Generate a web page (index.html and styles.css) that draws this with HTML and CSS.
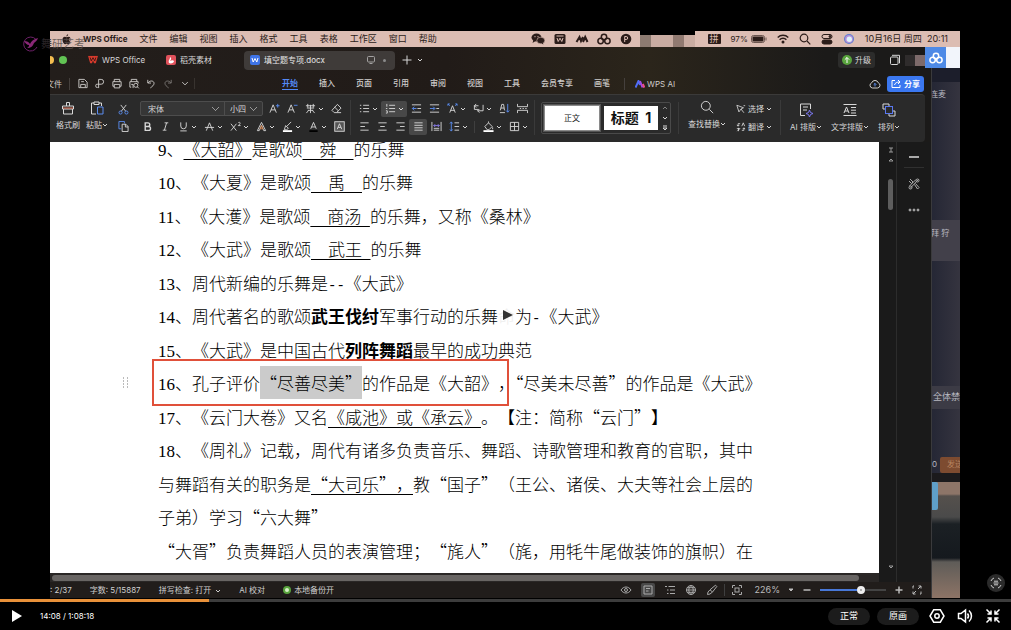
FILE: index.html
```html
<!DOCTYPE html>
<html lang="zh-CN">
<head>
    <meta charset="UTF-8">
    <meta name="viewport" content="width=device-width, initial-scale=1.0">
    <title>填空题专项.docx</title>
    <link rel="stylesheet" href="styles.css">
</head>
<body>
    <!-- Shared icons -->
    <svg class="sprite" aria-hidden="true">
        <symbol id="caret" viewBox="0 0 6 6"><path d="M1 2l2 2 2-2"/></symbol>
        <symbol id="pan" viewBox="0 0 14 12"><circle cx="7" cy="4" r="2.7"/><circle cx="3.6" cy="8" r="2.7"/><circle cx="10.4" cy="8" r="2.7"/></symbol>
        <symbol id="search" viewBox="0 0 12 12"><circle cx="5" cy="5" r="3.8"/><path d="M8 8l3.3 3.3"/></symbol>
        <symbol id="wps" viewBox="0 0 12 10"><path d="M0 0h12l-2.6 9H7.2L6 5.5 4.8 9H2.6z" fill="#d63a2c" stroke="none"/><path d="M2.6 2l1.3 4L6 2.2 8.1 6l1.3-4" stroke="#2a1512"/></symbol>
    </svg>

    <main class="stage">
        <div class="watermark">
            <svg viewBox="0 0 16 16"><path d="M13 3.5A7 7 0 1 0 14 11" stroke="#6d2068"/><path d="M1 5c3 0 5 1 6 3 1-3 4-5 8-6-1 3-3 4-4 5-1 3-3 5-7 5 2-1 2-2 2-3-2 0-4-2-5-4z" fill="#8a2877" stroke="none"/></svg>
            <span><b>舞</b>研艺考</span>
        </div>

        <div class="screen">
            <header class="menubar">
                <nav class="mac-menu">
                    <svg class="apple" viewBox="0 0 10 12"><path d="M6.8.2C6.9 1.500 6 2.700 4.900 2.700 4.800 1.500 5.700.4 6.800.2zM9.300 8.700c-.5 1.300-1.300 2.600-2.200 2.600-.8 0-1-.5-1.900-.5s-1.200.5-1.900.5C2.100 11.300.5 8.700.5 6.300.5 4.200 1.800 3 3.200 3c.8 0 1.400.5 2 .5.6 0 1.300-.6 2.300-.6.6 0 1.400.3 1.800 1-1.900 1.100-1.600 3.800 0 4.800z"/></svg>
                    <b>WPS Office</b>
                    <span>文件</span><span>编辑</span><span>视图</span><span>插入</span><span>格式</span><span>工具</span><span>表格</span><span>工作区</span><span>窗口</span><span>帮助</span>
                </nav>
                <div class="mac-apps">
                    <svg viewBox="0 0 14 12"><ellipse cx="5.500" cy="4.500" rx="5" ry="4"/><ellipse cx="9.800" cy="7.500" rx="4" ry="3.300" stroke="#dcbdb3" stroke-width=".6"/><path d="M1.500 10l1-3 2 1zM12.500 11.500l-1-2-1 1z"/><circle cx="4" cy="3.700" r=".6" fill="#dcbdb3"/><circle cx="7" cy="3.700" r=".6" fill="#dcbdb3"/></svg>
                    <svg viewBox="0 0 14 12"><rect x="1.500" y="1" width="11" height="10" rx="1.500"/><path d="M3.500 3h7M4 5l1.200 3.500L7 5.200l1.800 3.300L10 5" fill="none" stroke="#dcbdb3"/></svg>
                    <svg viewBox="0 0 14 12"><path d="M1.500 9l3-5 1.500 4 2-4M8 9l2.200-5 2.300 5" fill="none" stroke="#2b1c19" stroke-width="2"/></svg>
                    <svg viewBox="0 0 14 12" fill="none" stroke-width="1.500"><use href="#pan"/></svg>
                    <svg viewBox="0 0 14 12"><circle cx="7" cy="6" r="5.300"/><path d="M5.700 9V3.500h1.500a1.500 1.500 0 0 1 0 3H6" fill="none" stroke="#dcbdb3"/></svg>
                </div>
                <div class="mosaic"><i></i><i></i><i></i><i></i><i></i></div>
                <div class="mac-status">
                    <span class="ime">拼</span>
                    <span class="battery">97% <svg viewBox="0 0 16 8"><rect x=".5" y=".5" width="13" height="7" rx="2" fill="none" stroke="#6b5650"/><rect x="1.500" y="1.500" width="11" height="5" rx="1"/><path d="M15 2.500v3" stroke="#6b5650"/></svg></span>
                    <svg viewBox="0 0 12 10" fill="none" stroke-width="1.400"><path d="M.7 3.500a7.500 7.500 0 0 1 10.600 0M2.600 5.700a4.800 4.800 0 0 1 6.800 0"/><circle cx="6" cy="8" r=".8"/></svg>
                    <svg viewBox="0 0 12 12" fill="none" stroke-width="1.200"><use href="#search"/></svg>
                    <svg viewBox="0 0 12 12" fill="none"><rect x="1" y="1.500" width="10" height="4" rx="2"/><rect x="1" y="7" width="10" height="4" rx="2" fill="#2b1c19"/><circle cx="9" cy="3.500" r="1" fill="#2b1c19"/></svg>
                    <svg viewBox="0 0 12 12"><circle cx="6" cy="6" r="5" fill="#5c7fd0"/><circle cx="6" cy="6" r="4" fill="#b58fd8"/><circle cx="6.300" cy="6.200" r="2.700" fill="#dff3fa"/></svg>
                    <time>10月16日 周四&nbsp; 20:11</time>
                </div>
            </header>

            <div class="desktop">
                <section class="window">
                    <div class="tabs">
                        <div class="lights"><i></i><i></i></div>
                        <div class="tab home"><svg viewBox="0 0 12 10"><use href="#wps"/></svg>WPS Office</div>
                        <div class="tab store"><svg viewBox="0 0 10 10"><rect width="10" height="10" rx="2" fill="#e0525b" stroke="none"/><path d="M3 8c-1-3 1-3 1-6 2 1 1 3 0 4 2-1 3-1 4 0 0 2-3 3-5 2z" fill="#fff" stroke="none"/></svg>稻壳素材</div>
                        <div class="tab active">
                            <svg viewBox="0 0 10 10"><rect width="10" height="10" rx="2" fill="#3e74e8" stroke="none"/><path d="M2 3l1.200 4L5 3.500 6.800 7 8 3" stroke="#fff"/></svg>
                            填空题专项.docx
                            <svg class="screen-icon" viewBox="0 0 10 10"><rect x="1.500" y="1.500" width="7" height="5.500" rx="1"/><path d="M3.500 8.500h3"/></svg>
                            <i class="unsaved"></i>
                        </div>
                        <button class="new-tab" aria-label="新建"><svg viewBox="0 0 10 10"><path d="M5 .5v9M.5 5h9"/></svg><svg class="caret" viewBox="0 0 6 6"><use href="#caret"/></svg></button>
                        <div class="tabs-right">
                            <button class="upgrade"><svg viewBox="0 0 10 10"><circle cx="5" cy="5" r="5" fill="#58a33d" stroke="none"/><path d="M5 8V2.500M2.800 4.700L5 2.500l2.200 2.200" stroke="#fff"/></svg>升级</button>
                            <svg class="restore" viewBox="0 0 12 12"><rect x="1.500" y="3" width="7.500" height="7.500" rx="1"/><path d="M3 1.300h7.500v8"/></svg>
                            <div class="blurred"><i></i><i></i></div>
                        </div>
                    </div>

                    <div class="menus">
                        <span class="file-menu">文件</span>
                        <div class="quick">
                            <svg viewBox="0 0 12 12"><path d="M1.500 1.500h6l3 3v6h-9zM3.500 10V7h5v3M4 4h3"/></svg>
                            <svg viewBox="0 0 12 12"><path d="M4.500 11V1.500h2.800a2.500 2.500 0 0 1 0 5.300H3.500a1.800 1.800 0 1 0 0 3.500"/></svg>
                            <svg viewBox="0 0 12 12"><path d="M3 4V1.500h6V4M3 9H1.500V4h9v5H9M3 7h6v3.800H3z"/></svg>
                            <svg viewBox="0 0 12 12"><path d="M3 4V1.500h6V4M3 10H1.500V4h9v2M3 7h2v4"/><circle cx="8" cy="8" r="2.200"/><path d="M9.700 9.700l1.600 1.600"/></svg>
                            <svg viewBox="0 0 12 12"><path d="M2.500 2v3.500H6M2.800 5.300c2-3 6.500-2.500 6.500.5 0 2-2 3.500-4 5"/></svg>
                            <svg class="dim" viewBox="0 0 12 12"><path d="M9.500 2v3.500H6M9.200 5.300c-2-3-6.500-2.500-6.500.5 0 2 2 3.500 4 5"/></svg>
                            <svg viewBox="0 0 12 12"><path d="M3 4.500l3 3 3-3"/></svg>
                        </div>
                        <nav class="ribbon-tabs">
                            <a href="#" class="current">开始</a><a href="#">插入</a><a href="#">页面</a><a href="#">引用</a><a href="#">审阅</a><a href="#">视图</a><a href="#">工具</a><a href="#">会员专享</a><a href="#">画笔</a>
                        </nav>
                        <a href="#" class="ai"><svg viewBox="0 0 10 8"><path d="M.5 7.500L3.500 1l1.500 4" stroke="#4f6df5" stroke-width="2"/><path d="M5 1l2.500 6.500" stroke="#a14bea" stroke-width="2"/><path d="M7.800 4l1.500 3.500" stroke="#ee4f87" stroke-width="2"/></svg>WPS AI</a>
                        <div class="menus-right">
                            <svg viewBox="0 0 12 12"><path d="M3.500 10a2.700 2.700 0 0 1-.8-5.200 3.500 3.500 0 0 1 6.600 0A2.700 2.700 0 0 1 8.500 10z"/><path d="M6 8.500v-3M4.700 6.700L6 5.400l1.300 1.300" stroke="#5a8cf0"/></svg>
                            <button class="share"><svg viewBox="0 0 10 10"><path d="M4 1.500H1v7h8V6M3.500 6c.5-2 2-3 5.500-3M7 1l2 2-2 2"/></svg>分享</button>
                        </div>
                    </div>

                    <div class="ribbon">
                        <div class="clipboard">
                            <button class="big"><svg viewBox="0 0 14 14"><path d="M5.500 5V1.500h3V5M1.500 5h11v3h-11zM2.500 8v5h9V8"/><path d="M2 7h10" stroke="#d9694f"/></svg>格式刷</button>
                            <button class="big"><svg viewBox="0 0 14 14"><path d="M4 2H1.500v11H6M9 2h2.500v3M4 1h5v2.500H4z"/><path d="M7.500 6h5.500v7H7.500z" stroke="#5a8cf0"/></svg><span>粘贴<svg class="caret" viewBox="0 0 6 6"><use href="#caret"/></svg></span></button>
                            <div class="rows">
                                <button class="tool" aria-label="剪切"><svg viewBox="0 0 12 12"><path d="M3 1l5.500 7M9 1L3.500 8"/><g stroke="#5a8cf0"><circle cx="2.800" cy="9.300" r="1.700"/><circle cx="9.200" cy="9.300" r="1.700"/></g></svg></button>
                                <button class="tool" aria-label="复制"><svg viewBox="0 0 12 12"><path d="M3.500 8.500h-2.500v-8h6v2" stroke="#5a8cf0"/><path d="M4.500 3.500h4l2.500 2.500v5.500H4.500zM8 3.500v3h3"/></svg></button>
                            </div>
                        </div>

                        <div class="rows font-group">
                            <div class="row">
                                <div class="selects">
                                    <select class="font-name" aria-label="字体"><option>宋体</option></select>
                                    <select class="font-size" aria-label="字号"><option>小四</option></select>
                                </div>
                                <button class="tool" aria-label="增大字号"><svg viewBox="0 0 12 12"><path d="M1 10.500l3.500-8.500L8 10.500M2.200 7.500h4.600"/><path d="M9.500 1v4M7.500 3h4" stroke="#5a8cf0"/></svg></button>
                                <button class="tool" aria-label="减小字号"><svg viewBox="0 0 12 12"><path d="M1 10.500l3.500-8.500L8 10.500M2.200 7.500h4.600"/><path d="M7.500 2.500h4" stroke="#5a8cf0"/></svg></button>
                                <button class="tool drop" aria-label="拼音指南"><svg viewBox="0 0 12 12"><path d="M1 3h10M3 1v4M9 1v4M2 5.500h8M6 2v9M3 8h6M1.500 11L4 8M10.500 11L8 8"/></svg><svg class="caret" viewBox="0 0 6 6"><use href="#caret"/></svg></button>
                                <button class="tool" aria-label="清除格式"><svg viewBox="0 0 12 12"><path d="M7 1.500l4 4-5 5H3.500l-2.500-2.500zM4 4.500l4 4M6 10.500h5"/></svg></button>
                            </div>
                            <div class="row">
                                <button class="tool" aria-label="加粗"><svg viewBox="0 0 12 12"><path d="M3.500 2h3a2 2 0 0 1 0 4h-3zM3.500 6h3.700a2 2 0 0 1 0 4.200H3.500z" stroke-width="1.500"/></svg></button>
                                <button class="tool" aria-label="倾斜"><svg viewBox="0 0 12 12"><path d="M5 2h4M3 10h4M7.200 2L4.800 10"/></svg></button>
                                <button class="tool drop" aria-label="下划线"><svg viewBox="0 0 12 12"><path d="M3 1.500v4a3 3 0 0 0 6 0v-4M2.500 10.800h7"/></svg><svg class="caret" viewBox="0 0 6 6"><use href="#caret"/></svg></button>
                                <button class="tool drop" aria-label="删除线"><svg viewBox="0 0 12 12"><path d="M2.500 10.500L6 2l3.500 8.500M1 7h10"/></svg><svg class="caret" viewBox="0 0 6 6"><use href="#caret"/></svg></button>
                                <button class="tool drop" aria-label="上标"><svg viewBox="0 0 12 12"><path d="M1 3l6 7.500M7 3l-6 7.500M9 2c1-1.500 3 0 1.500 1.500L9 5h2.500"/></svg><svg class="caret" viewBox="0 0 6 6"><use href="#caret"/></svg></button>
                                <button class="tool drop" aria-label="文字效果"><svg viewBox="0 0 12 12"><path d="M1.500 10.500L6 1.500l4.500 9H8.500L6 5l-2.500 5.500z"/><path d="M4.500 8.500L6 5l1.500 3.500z" stroke="#d9864f"/></svg><svg class="caret" viewBox="0 0 6 6"><use href="#caret"/></svg></button>
                                <button class="tool drop" aria-label="突出显示"><svg viewBox="0 0 12 12"><path d="M10 1L5 6M4 5l3 3-2 1.500H2.500z"/><path d="M1 11h10" stroke="#fff" stroke-width="2"/></svg><svg class="caret" viewBox="0 0 6 6"><use href="#caret"/></svg></button>
                                <button class="tool drop" aria-label="字体颜色"><svg viewBox="0 0 12 12"><path d="M3 8.500L6 1.500l3 7M4 6.500h4"/><path d="M1.500 11h9" stroke="#000" stroke-width="2"/></svg><svg class="caret" viewBox="0 0 6 6"><use href="#caret"/></svg></button>
                                <button class="tool" aria-label="字符底纹"><svg viewBox="0 0 12 12"><rect x=".8" y=".8" width="10.400" height="10.400" fill="#555"/><path d="M3.500 9L6 3l2.500 6M4.500 7h3"/></svg></button>
                            </div>
                        </div>

                        <div class="rows para-group">
                            <div class="row">
                                <button class="tool drop" aria-label="项目符号"><svg viewBox="0 0 12 12"><path d="M1 2.500h1.500M1 6h1.500M1 9.500h1.500M4.500 2.500H11M4.500 6H11M4.500 9.500H11"/></svg><svg class="caret" viewBox="0 0 6 6"><use href="#caret"/></svg></button>
                                <button class="tool drop on" aria-label="编号"><svg viewBox="0 0 12 12"><path d="M2 1v3M1 6h1.500M1 8.500h1.500v2.500H1M4.500 2.500H11M4.500 6H11M4.500 9.500H11"/></svg><svg class="caret" viewBox="0 0 6 6"><use href="#caret"/></svg></button>
                                <button class="tool" aria-label="减少缩进"><svg viewBox="0 0 12 12"><path d="M1 2h10M7 6h4M1 10h10"/><path d="M6 6H1.500M3.500 4l-2 2 2 2" stroke="#5a8cf0"/></svg></button>
                                <button class="tool" aria-label="增加缩进"><svg viewBox="0 0 12 12"><path d="M1 2h10M8 6h3M1 10h10"/><path d="M1 6h5M4.500 4l2 2-2 2" stroke="#5a8cf0"/></svg></button>
                                <button class="tool drop" aria-label="中文版式"><svg viewBox="0 0 12 12"><path d="M3 10.500L6 3l3 7.500M4 8h4"/><path d="M1 1l2 2M1 3V1h2M11 1L9 3M11 3V1H9" stroke="#5a8cf0"/></svg><svg class="caret" viewBox="0 0 6 6"><use href="#caret"/></svg></button>
                                <button class="tool drop" aria-label="换行"><svg viewBox="0 0 12 12"><path d="M3.500 1L1.500 3l2 2M1.500 3H6M1.500 3v4H6M11 2v6.500H5M7 6.500l-2 2 2 2"/></svg><svg class="caret" viewBox="0 0 6 6"><use href="#caret"/></svg></button>
                                <button class="tool" aria-label="排序"><svg viewBox="0 0 12 12"><path d="M1 10.500h5.500M1.500 8L3 1.500h2L6 8M2 5.500h3.500"/><path d="M9.500 1v9M7.800 8.200L9.500 10l1.700-1.800" stroke="#5a8cf0"/></svg></button>
                                <button class="tool" aria-label="制表位"><svg viewBox="0 0 12 12"><path d="M.5 1v3h11V1M.5 11V8h11v3M3 6h1.500M6 6h1.500M9 6h1.500"/></svg></button>
                            </div>
                            <div class="row">
                                <button class="tool" aria-label="左对齐"><svg viewBox="0 0 12 12"><path d="M1.500 2h9M1.500 6h5M1.500 10h9"/></svg></button>
                                <button class="tool" aria-label="居中"><svg viewBox="0 0 12 12"><path d="M1.500 2h9M3.500 6h5M1.500 10h9"/></svg></button>
                                <button class="tool" aria-label="右对齐"><svg viewBox="0 0 12 12"><path d="M1.500 2h9M5.500 6h5M1.500 10h9"/></svg></button>
                                <button class="tool on" aria-label="两端对齐"><svg viewBox="0 0 12 12"><path d="M1.500 2h9M1.500 4.700h9M1.500 7.400h9M1.500 10h9"/></svg></button>
                                <button class="tool" aria-label="分散对齐"><svg viewBox="0 0 12 12"><path d="M1 1v10M11 1v10M3 10h6M3 8h6"/><path d="M3 5h6M4.500 3.500L3 5l1.500 1.500M7.500 3.500L9 5 7.500 6.500" stroke="#8b7ff0"/></svg></button>
                                <button class="tool drop" aria-label="行距"><svg viewBox="0 0 12 12"><path d="M6 2h5M6 6h5M6 10h5"/><path d="M2.500 1v10M1 2.800L2.500 1 4 2.800M1 9.200L2.500 11 4 9.200" stroke="#5a8cf0"/></svg><svg class="caret" viewBox="0 0 6 6"><use href="#caret"/></svg></button>
                                <i class="mini-sep"></i>
                                <button class="tool drop" aria-label="底纹"><svg viewBox="0 0 12 12"><path d="M2 6l4-4 4 4-3.500 3.500H4.500zM6 2V.5M10.500 7v2"/><path d="M.5 11h11" stroke="#fff" stroke-width="2"/></svg><svg class="caret" viewBox="0 0 6 6"><use href="#caret"/></svg></button>
                                <button class="tool drop" aria-label="边框"><svg viewBox="0 0 12 12"><path d="M1.500 1.500h9v9h-9zM6 1.500v9M1.500 6h9"/></svg><svg class="caret" viewBox="0 0 6 6"><use href="#caret"/></svg></button>
                            </div>
                        </div>

                        <div class="styles-group">
                            <div class="styles">
                                <button class="style-card normal">正文</button>
                                <button class="style-card heading">标题&nbsp; 1</button>
                                <div class="style-arrows"><svg class="dim" viewBox="0 0 6 6"><path d="M1 4l2-2 2 2"/></svg><svg viewBox="0 0 6 6"><use href="#caret"/></svg><svg viewBox="0 0 6 6"><path d="M1 1h4M1 3l2 2 2-2z"/></svg></div>
                            </div>
                        </div>

                        <div class="find-group">
                            <button class="big"><svg viewBox="0 0 12 12" class="thin"><use href="#search"/></svg><span>查找替换<svg class="caret" viewBox="0 0 6 6"><use href="#caret"/></svg></span></button>
                            <div class="rows">
                                <button class="labelled"><svg viewBox="0 0 12 12"><path d="M1 1.500l8 3L6 6l3.500 4.500M1 1.500l2.500 8L6 6M9 2h2"/></svg>选择<svg class="caret" viewBox="0 0 6 6"><use href="#caret"/></svg></button>
                                <button class="labelled"><svg viewBox="0 0 12 12"><path d="M5 2H2.500v3M1 3.500L2.500 5 4 3.500M7 10h2.500V7M8 8.500L9.500 7 11 8.500M7 5l1.700-4 1.700 4M1 8h4M3 7v4M1.500 11L4.500 8"/></svg>翻译<svg class="caret" viewBox="0 0 6 6"><use href="#caret"/></svg></button>
                            </div>
                        </div>

                        <div class="layout-group">
                            <button class="big"><svg viewBox="0 0 14 14"><path d="M11.500 6V1h-10v11.500H6M4 4h5M4 7h4"/><path d="M10.500 7l1 2.500 2.500 1-2.500 1-1 2.500-1-2.500-2.500-1 2.500-1z" stroke="#7c78f0"/></svg><span>AI 排版<svg class="caret" viewBox="0 0 6 6"><use href="#caret"/></svg></span></button>
                            <button class="big"><svg viewBox="0 0 14 14"><path d="M.5 1.500h13M.5 12.500h13M1 10l2.500-6L6 10M2 8h3M8 4.500h5M8 7.200h5M8 10h5"/></svg><span>文字排版<svg class="caret" viewBox="0 0 6 6"><use href="#caret"/></svg></span></button>
                            <button class="big"><svg viewBox="0 0 14 14"><path d="M3 6H1V1h6v2M11 8h2v5H7v-2"/><rect x="3.500" y="3.500" width="7" height="7" stroke="#5a78f0"/></svg><span>排列<svg class="caret" viewBox="0 0 6 6"><use href="#caret"/></svg></span></button>
                        </div>
                    </div>

                    <div class="work">
                        <div class="page-col">
                            <article class="page">
                                <div class="lines">
                                    <p><span class="n">9</span>、<u>《大韶》</u>是歌颂<u>　舜　</u>的乐舞</p>
                                    <p><span class="n">10</span>、《大夏》是歌颂<u>　禹　</u>的乐舞</p>
                                    <p><span class="n">11</span>、《大濩》是歌颂<u>　商汤&ensp;</u>的乐舞，又称《桑林》</p>
                                    <p><span class="n">12</span>、《大武》是歌颂<u>　武王&ensp;</u>的乐舞</p>
                                    <p><span class="n">13</span>、周代新编的乐舞是<span class="dash">--</span>《大武》</p>
                                    <p><span class="n">14</span>、周代著名的歌颂<b>武王伐纣</b>军事行动的乐舞<span class="ghost">命<svg viewBox="0 0 10 10"><path d="M0 0l10 5-10 5z"/></svg></span>为<span class="dash">-</span>《大武》</p>
                                    <p><span class="n">15</span>、《大武》是中国古代<b>列阵舞蹈</b>最早的成功典范</p>
                                    <p class="handle-line"><svg class="handle" viewBox="0 0 7 11"><path d="M1 1h1M5 1h1M1 4h1M5 4h1M1 7h1M5 7h1M1 10h1M5 10h1"/></svg><span class="boxed"><span class="n">16</span>、孔子评价<mark>“尽善尽美”</mark>的作品是《大韶》<span class="half">，</span></span>“尽美未尽善”的作品是《大武》</p>
                                    <p><span class="n">17</span>、《云门大卷》又名<u>《咸池》或《承云》</u>。【注：简称“云门”】</p>
                                    <p><span class="n">18</span>、《周礼》记载，周代有诸多负责音乐、舞蹈、诗歌管理和教育的官职，其中</p>
                                    <p>与舞蹈有关的职务是<u>“大司乐”，</u>教“国子”（王公、诸侯、大夫等社会上层的</p>
                                    <p>子弟）学习“六大舞”</p>
                                    <p>“大胥”负责舞蹈人员的表演管理；“旄人”（旄，用牦牛尾做装饰的旗帜）在</p>
                                </div>
                            </article>
                            <div class="h-scroll"><i></i></div>
                        </div>
                        <div class="v-scroll">
                            <svg viewBox="0 0 6 6"><path d="M1 1h4M1 5h4M3 1v4"/></svg>
                            <svg viewBox="0 0 6 6"><path d="M1 4l2-2 2 2z"/></svg>
                            <i></i>
                            <svg class="down" viewBox="0 0 6 6"><path d="M1 2l2 2 2-2z"/></svg>
                        </div>
                        <aside class="side">
                            <svg viewBox="0 0 12 12"><path d="M1 6h10" stroke-width="2"/></svg>
                            <hr>
                            <svg viewBox="0 0 12 12"><path d="M2 1l3 3-1.500 1.500L1 3M6.500 6.500L9.500 11l1.500-1.500L7.500 5.500M10.500 1.500L2 10.500M8 1.500L1.500 8"/><circle cx="9.500" cy="2.500" r="1.500"/><circle cx="2.500" cy="9.500" r="1.500"/></svg>
                            <svg viewBox="0 0 12 12" class="dots"><circle cx="2" cy="6" r="1"/><circle cx="6" cy="6" r="1"/><circle cx="10" cy="6" r="1"/></svg>
                        </aside>
                    </div>

                    <footer class="status">
                        <div class="counts"><span>: 2/37</span><span>字数: 5/15887</span><span>拼写检查: 打开<svg class="caret" viewBox="0 0 6 6"><use href="#caret"/></svg></span><span>AI 校对</span><span class="backup"><i></i>本地备份开</span></div>
                        <div class="views">
                            <svg viewBox="0 0 12 12"><path d="M1 6c2.500-4 7.500-4 10 0-2.500 4-7.500 4-10 0z"/><circle cx="6" cy="6" r="1.500"/></svg>
                            <svg class="on" viewBox="0 0 12 12"><path d="M2 2h8v8H2zM4 4.500h4M4 7h2.500"/></svg>
                            <svg viewBox="0 0 12 12"><path d="M1 2.500h2M4.500 2.500H11M3 6h1.500M6 6h5M3 9.500h1.500M6 9.500h5"/></svg>
                            <svg viewBox="0 0 12 12"><circle cx="6" cy="6" r="4.500"/><path d="M1.500 6h9M6 1.500c-3 3-3 6 0 9 3-3 3-6 0-9M2.300 3.700h7.400M2.300 8.300h7.400"/></svg>
                            <svg viewBox="0 0 12 12"><path d="M9.500 1.200l1.300 1.300L6.500 8 4 5.800zM4 5.800L2 8l-.5 2.500L4 10l2.500-2"/></svg>
                            <i class="mini-sep"></i>
                            <svg viewBox="0 0 12 12"><path d="M1.500 4V1.500H4M8 1.500h2.500V4M10.500 8v2.500H8M4 10.500H1.500V8"/><rect x="4" y="4" width="4" height="4"/></svg>
                        </div>
                        <div class="zoom">
                            <span>226%</span>
                            <svg class="caret" viewBox="0 0 6 6"><path d="M1 2l2 2 2-2z"/></svg>
                            <svg viewBox="0 0 10 10"><path d="M1.500 5h7" stroke-width="1.500"/></svg>
                            <input type="range" min="0" max="100" value="64" aria-label="缩放">
                            <svg viewBox="0 0 10 10"><path d="M1.500 5h7M5 1.500v7" stroke-width="1.500"/></svg>
                            <svg viewBox="0 0 10 10"><path d="M6.500 1H9v2.500M9 1L6 4M3.500 9H1V6.500M1 9l3-3M1 3.500V1h1M9 6.500V9H8"/></svg>
                        </div>
                    </footer>
                </section>

                <aside class="behind">
                    <div class="chat-top">连麦</div>
                    <div class="chat-name">拜 狩</div>
                    <div class="chat-mute">全体禁言</div>
                    <div class="chat-send"><span>0</span><b>发送</b></div>
                    <div class="photo"><i></i></div>
                </aside>

                <div class="pan-tile"><span><svg viewBox="0 0 14 12"><use href="#pan"/></svg></span></div>
            </div>
        </div>

        <button class="capture" aria-label="截图"><svg viewBox="0 0 12 12"><path d="M1 4a5 5 0 0 1 3-3M8 1a5 5 0 0 1 3 3M11 8a5 5 0 0 1-3 3M4 11a5 5 0 0 1-3-3M4 4.200h4M3.500 6h5M4 7.800h4"/></svg></button>
    </main>

    <div class="progress"><i style="width: 20.7%"></i></div>

    <div class="controls">
        <button class="play" aria-label="播放"><svg viewBox="0 0 10 12"><path d="M0 0l10 6-10 6z"/></svg></button>
        <span class="clock">14:08 / 1:08:18</span>
        <div class="controls-right">
            <button class="pill">正常</button>
            <button class="pill">原画</button>
            <button class="icon" aria-label="设置"><svg viewBox="0 0 16 16"><path d="M4.700 1.800h6.600L15 8l-3.700 6.200H4.700L1 8z"/><circle cx="8" cy="8" r="2.200"/></svg></button>
            <button class="icon" aria-label="音量"><svg viewBox="0 0 16 16"><path d="M1.500 5.500h2.500L8.500 2v12L4 10.500H1.500zM10.500 5.500c1.200 1.500 1.200 3.500 0 5M12 2.500c3.300 3 3.300 8 0 11"/></svg></button>
            <button class="icon" aria-label="退出全屏"><svg viewBox="0 0 16 16"><path d="M1.500 1.500L6 6M6 2.500V6H2.500M14.500 1.500L10 6M10 2.500V6h3.500M1.500 14.500L6 10M2.500 10H6v3.500M14.500 14.500L10 10M13.500 10H10v3.500"/></svg></button>
        </div>
    </div>
</body>
</html>
```
FILE: styles.css
```css
* {
    box-sizing: border-box;
}
body {
    margin: 0;
    height: 100vh;
    display: flex;
    flex-direction: column;
    background-color: #000;
    color: #d8d8d8;
    font-family: Inter, "Noto Sans CJK SC", sans-serif;
    font-size: 8px;
    line-height: 12px;
    overflow: hidden;
}
button, select {
    padding: 0;
    border: none;
    background: none;
    color: inherit;
    font: inherit;
    cursor: pointer;
}
a {
    color: inherit;
    text-decoration: none;
}
i {
    display: block;
}
svg {
    flex: none;
    width: 12px;
    height: 12px;
    fill: none;
    stroke: currentColor;
}
.sprite {
    position: absolute;
    width: 0;
    height: 0;
}
.caret {
    width: 6px;
    height: 6px;
}
.dim {
    opacity: 0.5;
}

/* Video stage */
.stage {
    position: relative;
    flex: 1;
    min-height: 0;
    display: flex;
    padding: 31px 51px 1px 50px;
}
.screen {
    flex: 1;
    min-width: 0;
    display: flex;
    flex-direction: column;
}
.watermark {
    position: absolute;
    z-index: 3;
    left: 23px;
    top: 36px;
    display: flex;
    align-items: center;
    gap: 2px;
    color: rgba(90, 80, 78, 0.85);
    font-size: 11px;
    line-height: 16px;
}
.watermark svg {
    width: 16px;
    height: 16px;
}
.watermark b {
    color: #2a2427;
    font-weight: normal;
}

/* macOS menu bar */
.menubar {
    flex: none;
    display: flex;
    align-items: center;
    height: 16px;
    padding: 0 12px;
    background-color: #dcbdb3;
    color: #2b1c19;
    font-size: 9px;
}
.menubar svg {
    stroke: none;
    fill: #2b1c19;
}
.menubar svg[fill="none"] {
    fill: none;
    stroke: #2b1c19;
}
.mac-menu, .mac-apps, .mac-status {
    display: flex;
    align-items: center;
    gap: 12px;
    white-space: nowrap;
}
.menubar .apple {
    width: 9px;
    height: 11px;
}
.mac-menu b {
    font-size: 8px;
}
.mac-apps {
    gap: 8px;
    margin-left: auto;
}
.mac-apps svg {
    width: 14px;
}
.mosaic {
    display: flex;
    align-self: stretch;
    margin: 0 13px 0 7px;
    border-top: 4px solid #000;
}
.mosaic i {
    width: 11px;
    background-color: #c9aca2;
}
.mosaic i:nth-child(1) {
    background-color: #8d7b71;
}
.mosaic i:nth-child(4) {
    background-color: #917a71;
}
.ime {
    padding: 0 2px;
    border-radius: 1px;
    background-color: #2b1c19;
    color: #dcbdb3;
    line-height: 10px;
}
.mac-status {
    gap: 10px;
}
.battery {
    display: flex;
    align-items: center;
    gap: 3px;
    font-size: 8px;
}
.battery svg {
    width: 16px;
    height: 8px;
}

/* Desktop: WPS window and what is behind it */
.desktop {
    position: relative;
    flex: 1;
    min-height: 0;
    display: flex;
}
.window {
    flex: 1;
    min-width: 0;
    display: flex;
    flex-direction: column;
    border-right: 1px solid #3a3a3c;
    background: linear-gradient(90deg, #231e1b, #211b18 45%, #2b251b 68%, #1b1a19 88%);
}

/* Title tabs */
.tabs {
    flex: none;
    display: flex;
    align-items: center;
    height: 26px;
    white-space: nowrap;
}
.lights {
    display: flex;
    gap: 5px;
    width: 38px;
}
.lights i {
    width: 8px;
    height: 8px;
    border-radius: 50%;
    background-color: #62c454;
}
.lights i:first-child {
    width: 4px;
    border-radius: 0 4px 4px 0;
    background-color: #f4be50;
}
.tab {
    display: flex;
    align-items: center;
    gap: 4px;
}
.tab svg {
    width: 10px;
    height: 10px;
}
.home, .store {
    width: 78px;
}
.active {
    width: 151px;
    height: 19px;
    padding: 0 6px;
    border-radius: 4px;
    background-color: #3f3b39;
    color: #e6e6e6;
}
.screen-icon {
    margin-left: auto;
    opacity: 0.6;
}
.unsaved {
    width: 3px;
    height: 3px;
    margin: 0 3px;
    border-radius: 50%;
    background-color: #8a8a8a;
}
.new-tab {
    display: flex;
    align-items: center;
    gap: 4px;
    margin-left: 6px;
}
.new-tab svg {
    height: 10px;
}
.tabs-right {
    display: flex;
    align-items: center;
    gap: 14px;
    margin-left: auto;
    padding-right: 6px;
}
.upgrade {
    display: flex;
    align-items: center;
    gap: 3px;
    height: 16px;
    padding: 0 4px;
    border-radius: 3px;
    background-color: #2c2c2b;
}
.upgrade svg {
    width: 10px;
    height: 10px;
}
.blurred {
    display: flex;
    margin-left: -10px;
}
.blurred i {
    width: 10px;
    height: 11px;
    background-color: #2f2c2c;
}
.blurred i:last-child {
    background-color: #7d6a6a;
}

/* Menu row */
.menus {
    flex: none;
    display: flex;
    align-items: center;
    height: 21px;
    color: #d0cecc;
    white-space: nowrap;
}
.file-menu {
    width: 20px;
    overflow: hidden;
    border-right: 1px solid #45403d;
    text-indent: -4px;
    line-height: 12px;
}
.quick {
    display: flex;
    gap: 5px;
    width: 125px;
    margin-right: 87px;
    padding-left: 7px;
    border-right: 1px solid #38332f;
}
.quick svg {
    height: 11px;
}
.ribbon-tabs {
    display: flex;
    gap: 21px;
    padding-right: 14px;
    font-weight: 500;
}
.current {
    border-bottom: 1px solid #5489f5;
    color: #5489f5;
    font-weight: bold;
}
.ai {
    display: flex;
    align-items: center;
    gap: 2px;
    padding-left: 10px;
    border-left: 1px solid #45403d;
}
.ai svg {
    width: 10px;
    height: 8px;
}
.menus-right {
    display: flex;
    align-items: center;
    gap: 6px;
    margin-left: auto;
    padding-right: 7px;
}
.share {
    display: flex;
    align-items: center;
    gap: 3px;
    height: 16px;
    padding: 0 4px;
    border-radius: 3px;
    background-color: #3b78f0;
    color: #fff;
    font-weight: bold;
}
.share svg {
    width: 10px;
    height: 10px;
}

/* Ribbon */
.ribbon {
    flex: none;
    display: flex;
    align-items: center;
    height: 48px;
    margin-right: 6px;
    padding-bottom: 2px;
    border-top: 1px solid #3b3a39;
    border-radius: 0 4px 4px 0;
    background-color: #2a2a2a;
    white-space: nowrap;
}
.ribbon svg {
    stroke-width: 1;
}
.big {
    display: flex;
    flex-direction: column;
    align-items: center;
    gap: 4px;
}
.big > svg {
    width: 14px;
    height: 14px;
}
.big span {
    display: flex;
    align-items: center;
}
.ribbon .thin {
    stroke-width: 0.8;
}
.clipboard {
    display: flex;
    gap: 6px;
    width: 88px;
    padding-left: 6px;
}
.rows {
    display: flex;
    flex-direction: column;
    gap: 1px;
}
.row {
    display: flex;
    align-items: center;
    height: 17px;
}
.tool {
    display: flex;
    align-items: center;
    justify-content: center;
    width: 18px;
    height: 16px;
}
.tool svg {
    width: 11px;
    height: 11px;
}
.tool .caret {
    width: 6px;
    height: 6px;
    margin-left: 2px;
}
.drop {
    width: 26px;
}
.on {
    border-radius: 2px;
    background-color: #484848;
}
.selects {
    display: flex;
    width: 123px;
    height: 15px;
    margin: 0 2px;
    border: 1px solid #4d4d4d;
    border-radius: 2px;
    background-color: #363636;
}
.selects select {
    padding: 0 7px;
    appearance: none;
    background: linear-gradient(45deg, transparent 45%, #999 45%, #999 55%, transparent 55%) right 8px center / 4px 4px no-repeat, linear-gradient(-45deg, transparent 45%, #999 45%, #999 55%, transparent 55%) right 5px center / 4px 4px no-repeat;
}
.selects .font-name {
    width: 83px;
}
.selects .font-size {
    flex: 1;
    padding: 0 5px;
    border-left: 1px solid #4d4d4d;
}
.font-group {
    width: 213px;
    border-right: 1px solid #3a3a3a;
}
.para-group {
    width: 184px;
    padding-left: 4px;
    border-right: 1px solid #3a3a3a;
}
.mini-sep {
    width: 1px;
    height: 12px;
    margin: 0 4px 0 3px;
    background-color: #3f3f3f;
}
.styles-group {
    padding: 0 7px 0 6px;
    border-right: 1px solid #3a3a3a;
}
.styles {
    display: flex;
    align-items: center;
    gap: 4px;
    height: 32px;
    padding: 0 2px;
    border: 1px solid #4a4a4a;
    border-radius: 2px;
}
.style-card {
    width: 54px;
    height: 24px;
    background-color: #fff;
    color: #111;
}
.normal {
    width: 56px;
    height: 26px;
    border: 1px solid #8a8a8a;
    outline: 1px solid #555;
}
.heading {
    font-size: 14px;
    font-weight: bold;
}
.style-arrows {
    display: flex;
    flex-direction: column;
    gap: 4px;
}
.style-arrows svg {
    width: 6px;
    height: 6px;
}
.find-group {
    display: flex;
    gap: 10px;
    padding: 0 8px 0 9px;
    border-right: 1px solid #3a3a3a;
}
.labelled {
    display: flex;
    align-items: center;
    gap: 2px;
    height: 17px;
}
.labelled svg:first-child {
    width: 10px;
    height: 10px;
}
.layout-group {
    display: flex;
    gap: 9px;
    padding-left: 9px;
}

/* Document */
.work {
    flex: 1;
    min-height: 0;
    display: flex;
    background-color: #1a1a1a;
}
.page-col {
    flex: 1;
    min-width: 0;
    display: flex;
    flex-direction: column;
}
.page {
    flex: 1;
    min-height: 0;
    display: flex;
    flex-direction: column;
    padding: 0 20px 6px 108px;
    overflow: hidden;
    background-color: #fff;
    color: #000;
}
.lines {
    flex: 1;
    min-height: 0;
    display: flex;
    flex-direction: column;
    margin-top: -10px;
    font-family: "Noto Sans CJK SC", sans-serif;
    font-size: 17px;
    font-weight: 300;
    line-height: 33px;
    white-space: nowrap;
    text-spacing-trim: space-all;
}
.lines p {
    flex: 1 1 0;
    min-height: 0;
    margin: 0;
}
.lines b {
    font-weight: bold;
}
.lines u {
    text-decoration-thickness: 1px;
    text-underline-offset: 3px;
}
.n, .dash {
    font-family: "Liberation Serif", serif;
    font-weight: normal;
    line-height: 1;
}
.dash {
    font-family: "Liberation Mono", monospace;
    font-size: 14px;
}
.ghost {
    position: relative;
    color: #eee;
}
.ghost svg {
    position: absolute;
    left: 5px;
    top: 7px;
    width: 10px;
    height: 10px;
    fill: #333;
    stroke: none;
}
.handle-line {
    position: relative;
}
.handle {
    position: absolute;
    left: -36px;
    top: 11px;
    width: 7px;
    height: 11px;
    stroke: #777;
}
.boxed {
    position: relative;
}
.boxed::after {
    content: "";
    position: absolute;
    inset: -11px -2px -11px -6px;
    border: 2px solid #e0503a;
}
.boxed mark {
    padding: 4px 0;
    background-color: #cbcbcb;
    color: inherit;
}
.half {
    font-feature-settings: "halt";
}
.h-scroll {
    flex: none;
    height: 9px;
    padding: 2px 20px 1px 2px;
    background-color: #2a2726;
}
.h-scroll i {
    height: 6px;
    border-radius: 3px;
    background-color: #686563;
}
.v-scroll {
    flex: none;
    width: 18px;
    display: flex;
    flex-direction: column;
    align-items: center;
    gap: 4px;
    padding: 5px 0 12px 6px;
    border-right: 1px solid #2c2c2c;
    color: #999;
}
.v-scroll svg {
    width: 6px;
    height: 6px;
}
.v-scroll i {
    width: 5px;
    height: 31px;
    margin-top: 12px;
    border-radius: 3px;
    background-color: #5e5e5e;
}
.v-scroll .down {
    margin-top: auto;
}
.side {
    flex: none;
    width: 34px;
    display: flex;
    flex-direction: column;
    align-items: center;
    padding-top: 9px;
    color: #aaa;
}
.side hr {
    width: 20px;
    margin: 4px 0 10px;
    border: none;
    border-top: 1px solid #303030;
}
.side .dots {
    margin-top: 14px;
    fill: #aaa;
}

/* Status bar */
.status {
    flex: none;
    display: flex;
    align-items: center;
    height: 16px;
    padding-right: 9px;
    background-color: #211d1b;
    color: #cfcfcf;
    white-space: nowrap;
}
.counts, .views, .zoom, .backup {
    display: flex;
    align-items: center;
}
.counts {
    gap: 18px;
}
.counts .caret {
    margin-left: 4px;
    vertical-align: middle;
}
.backup {
    gap: 3px;
}
.backup i {
    width: 8px;
    height: 8px;
    border: 2px solid #58a33d;
    border-radius: 50%;
    background-color: #d8f0c8;
}
.views {
    gap: 9px;
    margin-left: auto;
    color: #aaa;
}
.views .on {
    width: 14px;
    height: 14px;
    padding: 1px;
}
.views .mini-sep {
    margin: 0 -3px;
}
.zoom {
    gap: 8px;
    margin-left: 12px;
    color: #bbb;
    font-size: 9px;
}
.zoom svg {
    width: 10px;
    height: 10px;
}
.zoom .caret {
    width: 6px;
    fill: #bbb;
}
.zoom input {
    width: 66px;
    height: 8px;
    margin: 0;
    appearance: none;
    background: linear-gradient(90deg, #4878d8 64%, #444 64%) center / 100% 2px no-repeat;
}
.zoom input::-webkit-slider-thumb {
    appearance: none;
    width: 8px;
    height: 8px;
    border: 3px solid #eee;
    border-radius: 50%;
    background-color: #999;
}

/* Chat window behind */
.behind {
    flex: none;
    width: 28px;
    display: flex;
    flex-direction: column;
    overflow: hidden;
    background: linear-gradient(90deg, #252735, #35343f);
    color: #b8b8c0;
    white-space: nowrap;
}
.chat-top {
    height: 173px;
    padding-top: 41px;
    text-indent: -2px;
    background: linear-gradient(#1c1e2b 35px, transparent 35px);
}
.chat-name {
    height: 41px;
    margin-bottom: 125px;
    padding-top: 7px;
    background-color: #42404a;
    text-indent: -1px;
}
.chat-mute {
    height: 23px;
    margin-bottom: 48px;
    padding: 5px 1px;
    background-color: #3c3b45;
    font-size: 9px;
}
.chat-send {
    display: flex;
    gap: 3px;
    height: 25px;
    border-bottom: 9px solid #1b1a1c;
    line-height: 15px;
}
.chat-send b {
    flex: none;
    width: 30px;
    padding-left: 7px;
    border-radius: 2px 0 0 2px;
    background-color: #7d4b30;
    color: #b98560;
    font-weight: normal;
}
.photo {
    flex: 1;
    background: linear-gradient(#8d7568 12px, #55504c 14px, #4a4a4a 35px, #1b2024 42px, #15191e 76px, #5f5c58 80px, #8d7466 100%);
}
.photo i {
    width: 6px;
    height: 28px;
    border-radius: 0 2px 2px 0;
    background-color: #5f9fc8;
}
.pan-tile {
    position: absolute;
    right: 0;
    top: 0;
    width: 35px;
    height: 21px;
    background-color: #f2f5fb;
}
.pan-tile span {
    display: flex;
    align-items: center;
    justify-content: center;
    width: 21px;
    height: 21px;
    background-color: #4e8ae6;
    color: #fff;
}
.pan-tile svg {
    width: 14px;
    stroke-width: 1.5;
}

/* Player controls */
.capture {
    position: absolute;
    right: 6px;
    bottom: 7px;
    display: flex;
    align-items: center;
    justify-content: center;
    width: 18px;
    height: 18px;
    border-radius: 50%;
    background-color: #2b2b2b;
    color: #ccc;
}
.progress {
    flex: none;
    height: 3px;
    background-color: #3c3c3c;
}
.progress i {
    height: 3px;
    background-color: #e8913a;
}
.controls {
    flex: none;
    display: flex;
    align-items: center;
    height: 28px;
    padding: 0 10px 0 12px;
    color: #fff;
}
.play {
    display: flex;
    width: 28px;
}
.play svg {
    width: 10px;
    fill: #fff;
    stroke: none;
}
.controls-right {
    display: flex;
    align-items: center;
    gap: 7px;
    margin-left: auto;
}
.pill {
    width: 42px;
    height: 17px;
    border-radius: 9px;
    background-color: #1c1c1c;
    font-size: 9px;
}
.icon {
    display: flex;
    margin-left: 3px;
}
.icon + .icon {
    margin-left: 5px;
}
.icon svg {
    width: 16px;
    height: 16px;
    stroke-width: 1.5;
}
```
